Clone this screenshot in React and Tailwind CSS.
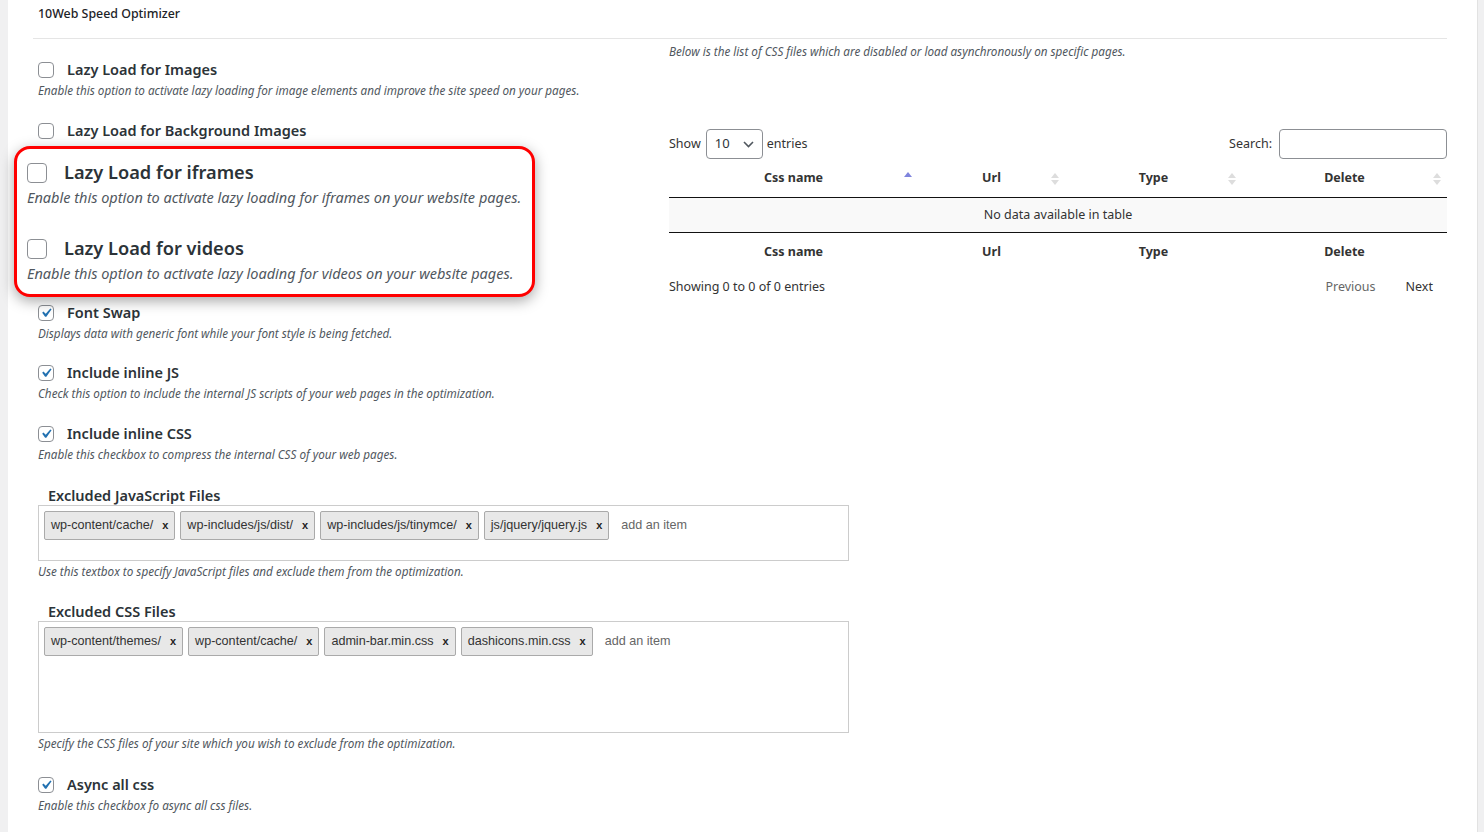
import React from 'react';

const ui = { fontFamily: '"Noto Sans", "Open Sans", sans-serif' };
const arial = { fontFamily: '"Liberation Sans", Arial, sans-serif' };

const Check = ({ checked, size = 16 }) => (
  <span
    className="shrink-0 inline-flex items-center justify-center rounded-[4px] border border-[#8c8f94] bg-white"
    style={{ width: size, height: size }}
  >
    {checked && (
      <svg viewBox="0 0 20 20" width={size + 4} height={size + 4} className="-m-[2px]">
        <path d="M14.83 4.89l1.34.94-5.81 8.38H9.02L5.78 9.67l1.34-1.25 2.57 2.4z" fill="#2271b1" />
      </svg>
    )}
  </span>
);

const Option = ({ label, desc, checked }) => (
  <div className="mb-[20.67px]">
    <div className="flex items-center h-[22px]">
      <Check checked={checked} />
      <span className="ml-[13px] text-[14.5px] font-semibold text-[#2c3338]">{label}</span>
    </div>
    {desc ? (
      <p className="mt-[1px] leading-[17px] text-[11.7px] italic text-[#50575e] whitespace-nowrap">{desc}</p>
    ) : (
      <div className="mt-[1px] h-[17px]" />
    )}
  </div>
);

const Tag = ({ text }) => (
  <span
    className="inline-flex items-center h-[29px] px-[6px] mr-[5px] mb-[5px] bg-[#e8e8e8] border border-[#aaa] rounded-[2px] text-[12.6px] text-[#333]"
    style={arial}
  >
    {text}
    <b className="ml-[9px] text-[11px] text-[#222]">x</b>
  </span>
);

const TagBox = ({ title, tags, h, desc }) => (
  <div>
    <h3 className="pl-[10px] text-[14.5px] font-semibold text-[#2c3338] leading-[22px]">{title}</h3>
    <div className="mt-[-1px] border border-[#ccc] pl-[5px] pt-[5px]" style={{ height: h }}>
      <div className="flex flex-wrap items-start">
        {tags.map((t) => (
          <Tag key={t} text={t} />
        ))}
        <span className="ml-[7px] mt-[5px] text-[12.6px] text-[#666]" style={arial}>
          add an item
        </span>
      </div>
    </div>
    <p className="mt-[2px] leading-[17px] text-[11.7px] italic text-[#50575e]">{desc}</p>
  </div>
);

const Sort = ({ active }) => (
  <svg width="8" height="14" viewBox="0 0 8 14" className="shrink-0">
    {active ? (
      <path d="M0 5 L4 0 L8 5 Z" fill="#7f84dd" />
    ) : (
      <>
        <path d="M0 6 L4 1 L8 6 Z" fill="#ddd" />
        <path d="M0 8 L4 13 L8 8 Z" fill="#ddd" />
      </>
    )}
  </svg>
);

const cols = [
  { name: 'Css name', w: 249 },
  { name: 'Url', w: 147 },
  { name: 'Type', w: 177 },
  { name: 'Delete', w: 205 },
];

export default function App() {
  return (
    <div className="flex min-h-[832px] bg-[#f0f0f1]" style={ui}>
      <div className="w-[8px] shrink-0" />
      <div className="w-[1469px] bg-white pl-[25px] pr-[30px]">
        <div className="pl-[5px] pt-[5px] h-[38px] text-[12.4px] font-medium text-[#1d2327] leading-[18px]">
          10Web Speed Optimizer
        </div>
        <div className="border-t border-[#e5e5e5]" />

        <div className="flex pl-[5px]">
          <div className="w-[631px] shrink-0 pt-[20px] relative">
            <Option
              label="Lazy Load for Images"
              desc="Enable this option to activate lazy loading for image elements and improve the site speed on your pages."
            />
            {/* the callout covers this item's description and the next two rows */}
            <Option label="Lazy Load for Background Images" />
            <div className="h-[121.34px]" />
            <Option checked label="Font Swap" desc="Displays data with generic font while your font style is being fetched." />
            <Option
              checked
              label="Include inline JS"
              desc="Check this option to include the internal JS scripts of your web pages in the optimization."
            />
            <Option
              checked
              label="Include inline CSS"
              desc="Enable this checkbox to compress the internal CSS of your web pages."
            />

            {/* zoomed callout */}
            <div className="absolute left-[-24px] top-[107px] w-[521px] h-[151px] bg-white border-[3px] border-[#ff0000] rounded-[16px] shadow-[0_4px_14px_rgba(0,0,0,0.35)] pl-[10px] pt-[11px]">
              <div className="flex items-center h-[26px]">
                <Check size={20} />
                <span className="ml-[17px] text-[18.2px] font-semibold text-[#2c3338]">Lazy Load for iframes</span>
              </div>
              <p className="mt-0 leading-[22px] text-[14.5px] italic text-[#50575e] whitespace-nowrap">
                Enable this option to activate lazy loading for iframes on your website pages.
              </p>
              <div className="flex items-center h-[26px] mt-[28px]">
                <Check size={20} />
                <span className="ml-[17px] text-[18.2px] font-semibold text-[#2c3338]">Lazy Load for videos</span>
              </div>
              <p className="mt-0 leading-[22px] text-[14.5px] italic text-[#50575e] whitespace-nowrap">
                Enable this option to activate lazy loading for videos on your website pages.
              </p>
            </div>
          </div>

          <div className="w-[778px] shrink-0">
            <p className="mt-[4px] leading-[17px] text-[11.7px] italic text-[#50575e]">
              Below is the list of CSS files which are disabled or load asynchronously on specific pages.
            </p>
            <div className="mt-[69px] flex items-center justify-between h-[30px] text-[12.5px] text-[#333]">
              <div className="flex items-center">
                <span>Show</span>
                <div className="ml-[5px] mr-[4px] w-[57px] h-[30px] border border-[#8c8f94] rounded-[4px] flex items-center justify-between pl-[8px] pr-[8px]">
                  <span className="text-[13px] text-[#2c3338]">10</span>
                  <svg width="11" height="7" viewBox="0 0 11 7">
                    <path d="M1 1l4.5 4.5L10 1" stroke="#50575e" strokeWidth="1.6" fill="none" />
                  </svg>
                </div>
                <span>entries</span>
              </div>
              <div className="flex items-center">
                <span className="mr-[7px]">Search:</span>
                <div className="w-[168px] h-[30px] border border-[#8c8f94] rounded-[4px] bg-white" />
              </div>
            </div>

            <div className="mt-[1px] text-[12.5px] text-[#333]">
              <div className="flex h-[38px] border-b border-[#111]">
                {cols.map((c, i) => (
                  <div key={c.name} className="flex items-center justify-center relative font-bold" style={{ width: c.w }}>
                    <span>{c.name}</span>
                    <span className="absolute right-[6px] top-[12px]">
                      <Sort active={i === 0} />
                    </span>
                  </div>
                ))}
              </div>
              <div className="h-[35px] bg-[#f9f9f9] border-b border-[#111] flex items-center justify-center">
                No data available in table
              </div>
              <div className="flex h-[38px]">
                {cols.map((c) => (
                  <div key={c.name} className="flex items-center justify-center font-bold" style={{ width: c.w }}>
                    {c.name}
                  </div>
                ))}
              </div>
              <div className="flex items-center justify-between h-[32px]">
                <span>Showing 0 to 0 of 0 entries</span>
                <div className="flex items-center pr-[14px]">
                  <span className="text-[#666]">Previous</span>
                  <span className="ml-[30px]">Next</span>
                </div>
              </div>
            </div>
          </div>
        </div>

        <div className="pl-[5px] w-[816px]">
          <TagBox
            title="Excluded JavaScript Files"
            h={56}
            tags={['wp-content/cache/', 'wp-includes/js/dist/', 'wp-includes/js/tinymce/', 'js/jquery/jquery.js']}
            desc="Use this textbox to specify JavaScript files and exclude them from the optimization."
          />
          <div className="mt-[20px]">
            <TagBox
              title="Excluded CSS Files"
              h={112}
              tags={['wp-content/themes/', 'wp-content/cache/', 'admin-bar.min.css', 'dashicons.min.css']}
              desc="Specify the CSS files of your site which you wish to exclude from the optimization."
            />
          </div>
          <div className="mt-[22px]">
            <Option checked label="Async all css" desc="Enable this checkbox fo async all css files." />
          </div>
        </div>
      </div>
      <div className="w-[7px] shrink-0 bg-[#f0f0f1] border-l border-[#e2e2e2]" />
    </div>
  );
}
